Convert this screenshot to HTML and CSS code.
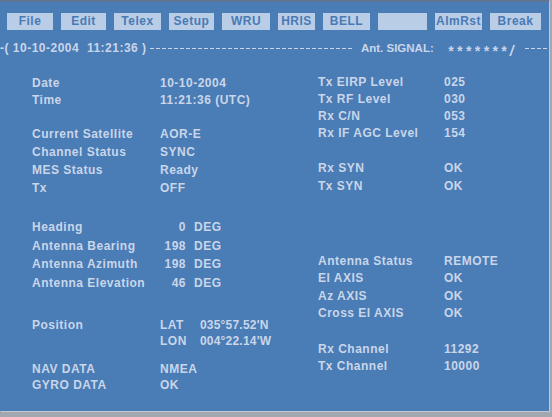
FILE: index.html
```html
<!DOCTYPE html>
<html>
<head>
<meta charset="utf-8">
<link rel="stylesheet" href="styles.css">
</head>
<body>
<div class="screen">
  <div class="toolbar">
    <div class="btn">File</div>
    <div class="btn">Edit</div>
    <div class="btn">Telex</div>
    <div class="btn">Setup</div>
    <div class="btn">WRU</div>
    <div class="btn">HRIS</div>
    <div class="btn">BELL</div>
    <div class="btn"></div>
    <div class="btn">AlmRst</div>
    <div class="btn">Break</div>
  </div>
  <div class="statusline">
    <span class="stamp">-( 10-10-2004&nbsp; 11:21:36 )</span>
    <span class="dashes"></span>
    <span class="signal">Ant. SIGNAL:</span>
    <span class="stars">*******/</span>
    <span class="dashes tail"></span>
  </div>
  <div class="main">
    <div class="col left">
      <div class="group lh17">
        <div class="row"><span>Date</span><span>10-10-2004</span></div>
        <div class="row"><span>Time</span><span>11:21:36 (UTC)</span></div>
      </div>
      <div class="group lh18 m16">
        <div class="row"><span>Current Satellite</span><span>AOR-E</span></div>
        <div class="row"><span>Channel Status</span><span>SYNC</span></div>
        <div class="row"><span>MES Status</span><span>Ready</span></div>
        <div class="row"><span>Tx</span><span>OFF</span></div>
      </div>
      <div class="group lh187 m21">
        <div class="row"><span>Heading</span><span class="deg"><span class="num">0</span><span>DEG</span></span></div>
        <div class="row"><span>Antenna Bearing</span><span class="deg"><span class="num">198</span><span>DEG</span></span></div>
        <div class="row"><span>Antenna Azimuth</span><span class="deg"><span class="num">198</span><span>DEG</span></span></div>
        <div class="row"><span>Antenna Elevation</span><span class="deg"><span class="num">46</span><span>DEG</span></span></div>
      </div>
      <div class="group lh16 m24">
        <div class="row"><span>Position</span><span class="pos"><span class="axis">LAT</span><span class="coord">035°57.52'N</span></span></div>
        <div class="row"><span></span><span class="pos"><span class="axis">LON</span><span class="coord">004°22.14'W</span></span></div>
      </div>
      <div class="group lh16 m12">
        <div class="row"><span>NAV DATA</span><span>NMEA</span></div>
        <div class="row"><span>GYRO DATA</span><span>OK</span></div>
      </div>
    </div>
    <div class="col right">
      <div class="group lh17">
        <div class="row"><span>Tx EIRP Level</span><span>025</span></div>
        <div class="row"><span>Tx RF Level</span><span>030</span></div>
        <div class="row"><span>Rx C/N</span><span>053</span></div>
        <div class="row"><span>Rx IF AGC Level</span><span>154</span></div>
      </div>
      <div class="group lh18 m17">
        <div class="row"><span>Rx SYN</span><span>OK</span></div>
        <div class="row"><span>Tx SYN</span><span>OK</span></div>
      </div>
      <div class="group lh174 m58">
        <div class="row"><span>Antenna Status</span><span>REMOTE</span></div>
        <div class="row"><span>El AXIS</span><span>OK</span></div>
        <div class="row"><span>Az AXIS</span><span>OK</span></div>
        <div class="row"><span>Cross El AXIS</span><span>OK</span></div>
      </div>
      <div class="group lh174 m18">
        <div class="row"><span>Rx Channel</span><span>11292</span></div>
        <div class="row"><span>Tx Channel</span><span>10000</span></div>
      </div>
    </div>
  </div>
</div>
</body>
</html>
```

FILE: styles.css
```css
html, body {
  margin: 0;
  padding: 0;
}
body {
  width: 552px;
  height: 417px;
  background: #a3a8ae;
  overflow: hidden;
  font-family: "Liberation Sans", Arial, sans-serif;
  font-weight: bold;
  font-size: 12px;
  letter-spacing: 0.5px;
  color: #c9d6ea;
}
.screen {
  width: 549px;
  height: 409px;
  border-top: 2px solid #5f7596;
  background: #4a7cb5;
  box-shadow: 1px 1px 0 #c2c8d0;
  overflow: hidden;
}
.toolbar {
  display: grid;
  grid-template-columns: 46px 45px 47px 45px 48px 37px 47px 49px 47px 51px;
  column-gap: 8px;
  padding: 11px 0 0 7px;
}
.btn {
  height: 17px;
  line-height: 17px;
  background: #b9cde6;
  color: #4a7ab4;
  text-align: center;
}
.statusline {
  display: flex;
  align-items: center;
  height: 14px;
  line-height: 14px;
  margin-top: 11px;
  white-space: nowrap;
}
.stamp {
  flex: none;
}
.dashes {
  flex: 1;
  height: 1px;
  margin: 1px 8px 0 3px;
  background: repeating-linear-gradient(to right, #c9d6ea 0 4px, transparent 4px 6px);
}
.dashes.tail {
  flex: none;
  width: 24px;
  margin-right: 0;
  margin-left: 8px;
}
.signal {
  flex: none;
  font-size: 11.5px;
  letter-spacing: 0;
  margin-right: 14px;
}
.stars {
  flex: none;
  font-size: 14px;
  font-style: italic;
  letter-spacing: 3.4px;
  margin-top: 5px;
}
.main {
  display: grid;
  grid-template-columns: 286px 1fr;
  padding: 19px 0 0 32px;
}
.col.left {
  padding-top: 1px;
}
.row {
  display: grid;
  grid-template-columns: 128px auto;
  white-space: nowrap;
}
.right .row {
  grid-template-columns: 126px auto;
}
.lh17 { line-height: 17px; }
.lh18 { line-height: 18px; }
.lh187 { line-height: 18.67px; }
.lh16 { line-height: 16px; }
.lh174 { line-height: 17.4px; }
.m12 { margin-top: 12px; }
.m16 { margin-top: 16px; }
.m17 { margin-top: 17px; }
.m18 { margin-top: 18px; }
.m21 { margin-top: 21px; }
.m24 { margin-top: 24px; }
.m58 { margin-top: 58px; }
.deg {
  display: flex;
  gap: 8px;
}
.deg .num {
  width: 26px;
  text-align: right;
}
.pos {
  display: flex;
}
.pos .axis {
  width: 40px;
}
.pos .coord {
  letter-spacing: 0.2px;
}
```
